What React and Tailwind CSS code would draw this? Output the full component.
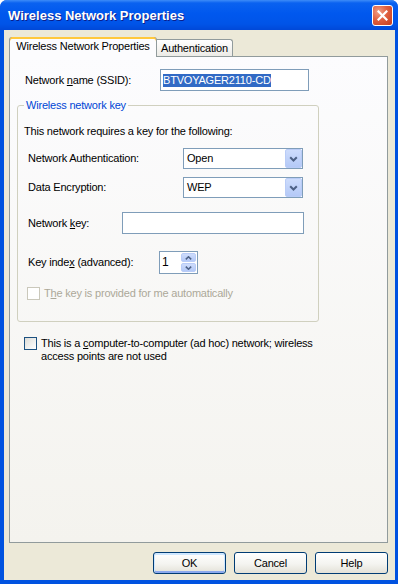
import React from "react";

function Chevron({ up, small }) {
  if (small) {
    return (
      <svg width="7" height="4" viewBox="0 0 7 4">
        <polyline
          points={up ? "0.8,3.4 3.5,0.8 6.2,3.4" : "0.8,0.6 3.5,3.2 6.2,0.6"}
          fill="none"
          stroke="#4d6185"
          strokeWidth="1.5"
        />
      </svg>
    );
  }
  return (
    <svg width="9" height="6" viewBox="0 0 9 6">
      <polyline points="1.2,1.2 4.5,4.5 7.8,1.2" fill="none" stroke="#4d6185" strokeWidth="2" />
    </svg>
  );
}

function Combo({ value }) {
  return (
    <div className="flex h-[21px] w-[120px] border border-[#7f9db9] bg-white">
      <div className="flex flex-1 items-center pl-[3px]">{value}</div>
      <div className="flex w-[17px] items-center justify-center rounded-[2px] border border-[#b9ccf7] bg-[linear-gradient(to_bottom,#cddcfc,#b4c9f7)]">
        <Chevron />
      </div>
    </div>
  );
}

function Btn({ children, def }) {
  return (
    <div
      className={
        def
          ? "flex h-[22px] w-[73px] items-center justify-center rounded-[3px] border border-[#003c74] bg-[linear-gradient(to_bottom,#ffffff,#f4f4f0_55%,#e3e1d7)] shadow-[inset_0_1px_0_1px_#cee7ff,inset_0_-1px_0_1px_#8ca9ee]"
          : "flex h-[22px] w-[73px] items-center justify-center rounded-[3px] border border-[#003c74] bg-[linear-gradient(to_bottom,#ffffff,#f4f4f0_55%,#e3e1d7)]"
      }
    >
      {children}
    </div>
  );
}

export default function App() {
  return (
    <div className="flex h-[584px] w-[398px] flex-col overflow-hidden rounded-t-[7px] bg-[#0052e0] font-['Liberation_Sans',Arial,sans-serif] text-[11px] leading-[13px] tracking-[-0.2px] text-black">
      {/* Title bar */}
      <div className="flex h-[30px] shrink-0 items-center bg-[linear-gradient(to_bottom,#3d8cf8_0%,#0a62f0_10%,#0058ee_45%,#0054e8_80%,#0048d8_100%)] pl-[8px] pr-[5px]">
        <span className="text-[13px] font-bold tracking-normal text-white [text-shadow:1px_1px_0_#0b1e8a]">
          Wireless Network Properties
        </span>
        <div className="ml-auto flex h-[21px] w-[21px] items-center justify-center rounded-[3px] border border-white bg-[radial-gradient(circle_at_30%_30%,#f0a088,#e06040_45%,#c63c1c)]">
          <svg width="11" height="11" viewBox="0 0 11 11">
            <path d="M1.5 1.5 L9.5 9.5 M9.5 1.5 L1.5 9.5" stroke="white" strokeWidth="2.2" strokeLinecap="square" />
          </svg>
        </div>
      </div>

      {/* Client area */}
      <div className="mb-[4px] ml-[4px] mr-[3px] flex flex-1 flex-col bg-[#ece9d8] pl-[5px] pr-[7px] pt-[7px]">
        {/* Tabs */}
        <div className="flex h-[19px] items-end">
          <div className="relative z-10 -mb-px flex h-[20px] w-[148px] items-start justify-center rounded-t-[3px] border-x border-[#919b9c] bg-[#fcfcfe] pt-[3px] shadow-[inset_0_2px_0_#ffc83c,inset_0_1px_0_#e68b2c]">
            <span>Wireless Network Properties</span>
          </div>
          <div className="flex h-[17px] w-[76px] items-center justify-center rounded-tr-[3px] border-r border-t border-[#919b9c] bg-[linear-gradient(to_bottom,#ffffff,#ecebe6)] pt-[1px]">
            Authentication
          </div>
        </div>

        {/* Panel */}
        <div className="flex h-[487px] flex-col border border-[#919b9c] bg-[linear-gradient(to_bottom,#fcfcfe,#f4f3ee)]">
          <div className="mt-[12px] flex items-center pl-[15px]">
            <div className="w-[135px]">
              Network <span className="underline">n</span>ame (SSID):
            </div>
            <div className="flex h-[22px] w-[149px] items-center border border-[#7f9db9] bg-white pl-[2px]">
              <span className="bg-[#316ac5] text-white">BTVOYAGER2110-CD</span>
            </div>
          </div>

          <fieldset className="ml-[7px] mt-[8px] h-[223px] w-[302px] rounded-[3px] border border-[#d0d0bf] p-0">
            <legend className="ml-[6px] px-[2px] text-[#0046d5]">Wireless network key</legend>
            <div className="mt-[13px] pl-[6px]">This network requires a key for the following:</div>

            <div className="mt-[10px] flex items-center pl-[10px]">
              <div className="w-[155px]">Network Authentication:</div>
              <Combo value="Open" />
            </div>

            <div className="mt-[8px] flex items-center pl-[10px]">
              <div className="w-[155px]">Data Encryption:</div>
              <Combo value="WEP" />
            </div>

            <div className="mt-[14px] flex items-center pl-[10px]">
              <div className="w-[94px]">
                Network <span className="underline">k</span>ey:
              </div>
              <div className="h-[22px] w-[182px] border border-[#7f9db9] bg-white" />
            </div>

            <div className="mt-[17px] flex items-center pl-[10px]">
              <div className="w-[131px]">
                Key inde<span className="underline">x</span> (advanced):
              </div>
              <div className="flex h-[23px] w-[39px] border border-[#7f9db9] bg-white">
                <div className="flex flex-1 items-center pl-[2px] text-[12px]">1</div>
                <div className="my-[1px] mr-[1px] flex w-[15px] flex-col gap-px">
                  <div className="flex flex-1 items-center justify-center rounded-[2px] border border-[#b9ccf7] bg-[linear-gradient(to_bottom,#cddcfc,#b4c9f7)]">
                    <Chevron up small />
                  </div>
                  <div className="flex flex-1 items-center justify-center rounded-[2px] border border-[#b9ccf7] bg-[linear-gradient(to_bottom,#cddcfc,#b4c9f7)]">
                    <Chevron small />
                  </div>
                </div>
              </div>
            </div>

            <div className="mt-[13px] flex items-center pl-[9px] text-[#aca899]">
              <div className="h-[13px] w-[13px] border border-[#cac8bb] bg-white" />
              <div className="ml-[4px]">
                T<span className="underline">h</span>e key is provided for me automatically
              </div>
            </div>
          </fieldset>

          <div className="ml-[14px] mt-[15px] flex items-start">
            <div className="h-[13px] w-[13px] shrink-0 border border-[#1c5180] bg-[linear-gradient(135deg,#dcdcd7,#ffffff)]" />
            <div className="ml-[4px]">
              This is a <span className="underline">c</span>omputer-to-computer (ad hoc) network; wireless
              <br />
              access points are not used
            </div>
          </div>
        </div>

        {/* Buttons */}
        <div className="mt-[9px] flex justify-end gap-[8px]">
          <Btn def>OK</Btn>
          <Btn>Cancel</Btn>
          <Btn>Help</Btn>
        </div>
      </div>
    </div>
  );
}
